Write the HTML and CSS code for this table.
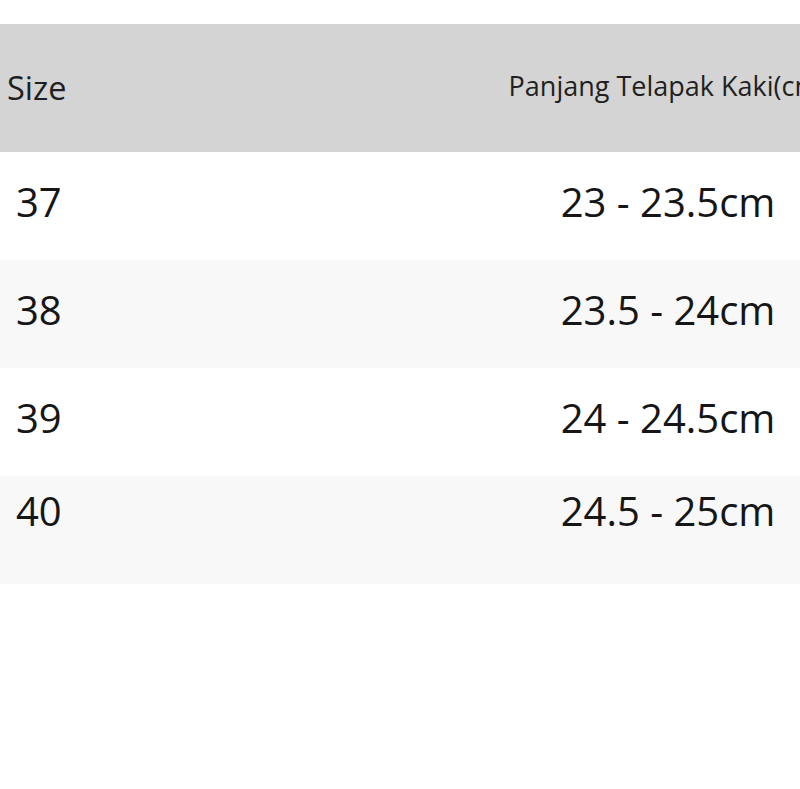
FILE: index.html
```html
<!DOCTYPE html>
<html lang="id">
<head>
<meta charset="utf-8">
<title>Size Chart</title>
<link rel="stylesheet" href="styles.css">
</head>
<body>
<div class="chart">
  <div class="row head">
    <div class="cell c1">Size</div>
    <div class="cell c2">Panjang Telapak Kaki(cm)</div>
  </div>
  <div class="row">
    <div class="cell c1">37</div>
    <div class="cell c2">23 - 23.5cm</div>
  </div>
  <div class="row alt">
    <div class="cell c1">38</div>
    <div class="cell c2">23.5 - 24cm</div>
  </div>
  <div class="row">
    <div class="cell c1">39</div>
    <div class="cell c2">24 - 24.5cm</div>
  </div>
  <div class="row alt last">
    <div class="cell c1">40</div>
    <div class="cell c2">24.5 - 25cm</div>
  </div>
</div>
</body>
</html>
```

FILE: styles.css
```css
html, body {
  margin: 0;
  padding: 0;
  background: #ffffff;
  overflow: hidden;
}
body {
  font-family: "Open Sans", "Noto Sans", sans-serif;
  color: #161616;
}
.chart {
  margin-top: 24px;
  width: 800px;
}
.row {
  display: grid;
  grid-template-columns: 536px 264px;
  align-items: center;
  height: 108px;
  box-sizing: border-box;
  padding-bottom: 10px;
  font-size: 40px;
}
.row.alt {
  background: #f8f8f8;
}
.row.last {
  padding-bottom: 40px;
}
.row.head {
  height: 128px;
  padding-bottom: 0;
  background: #d4d4d4;
  color: #1f1f1f;
}
.cell {
  display: flex;
  white-space: nowrap;
}
.c1 {
  padding-left: 16px;
}
.c2 {
  justify-content: center;
}
.head .c1 {
  font-size: 32.5px;
  padding-left: 7px;
  padding-bottom: 2px;
}
.head .c2 {
  font-size: 27px;
  padding-bottom: 5px;
}
```
